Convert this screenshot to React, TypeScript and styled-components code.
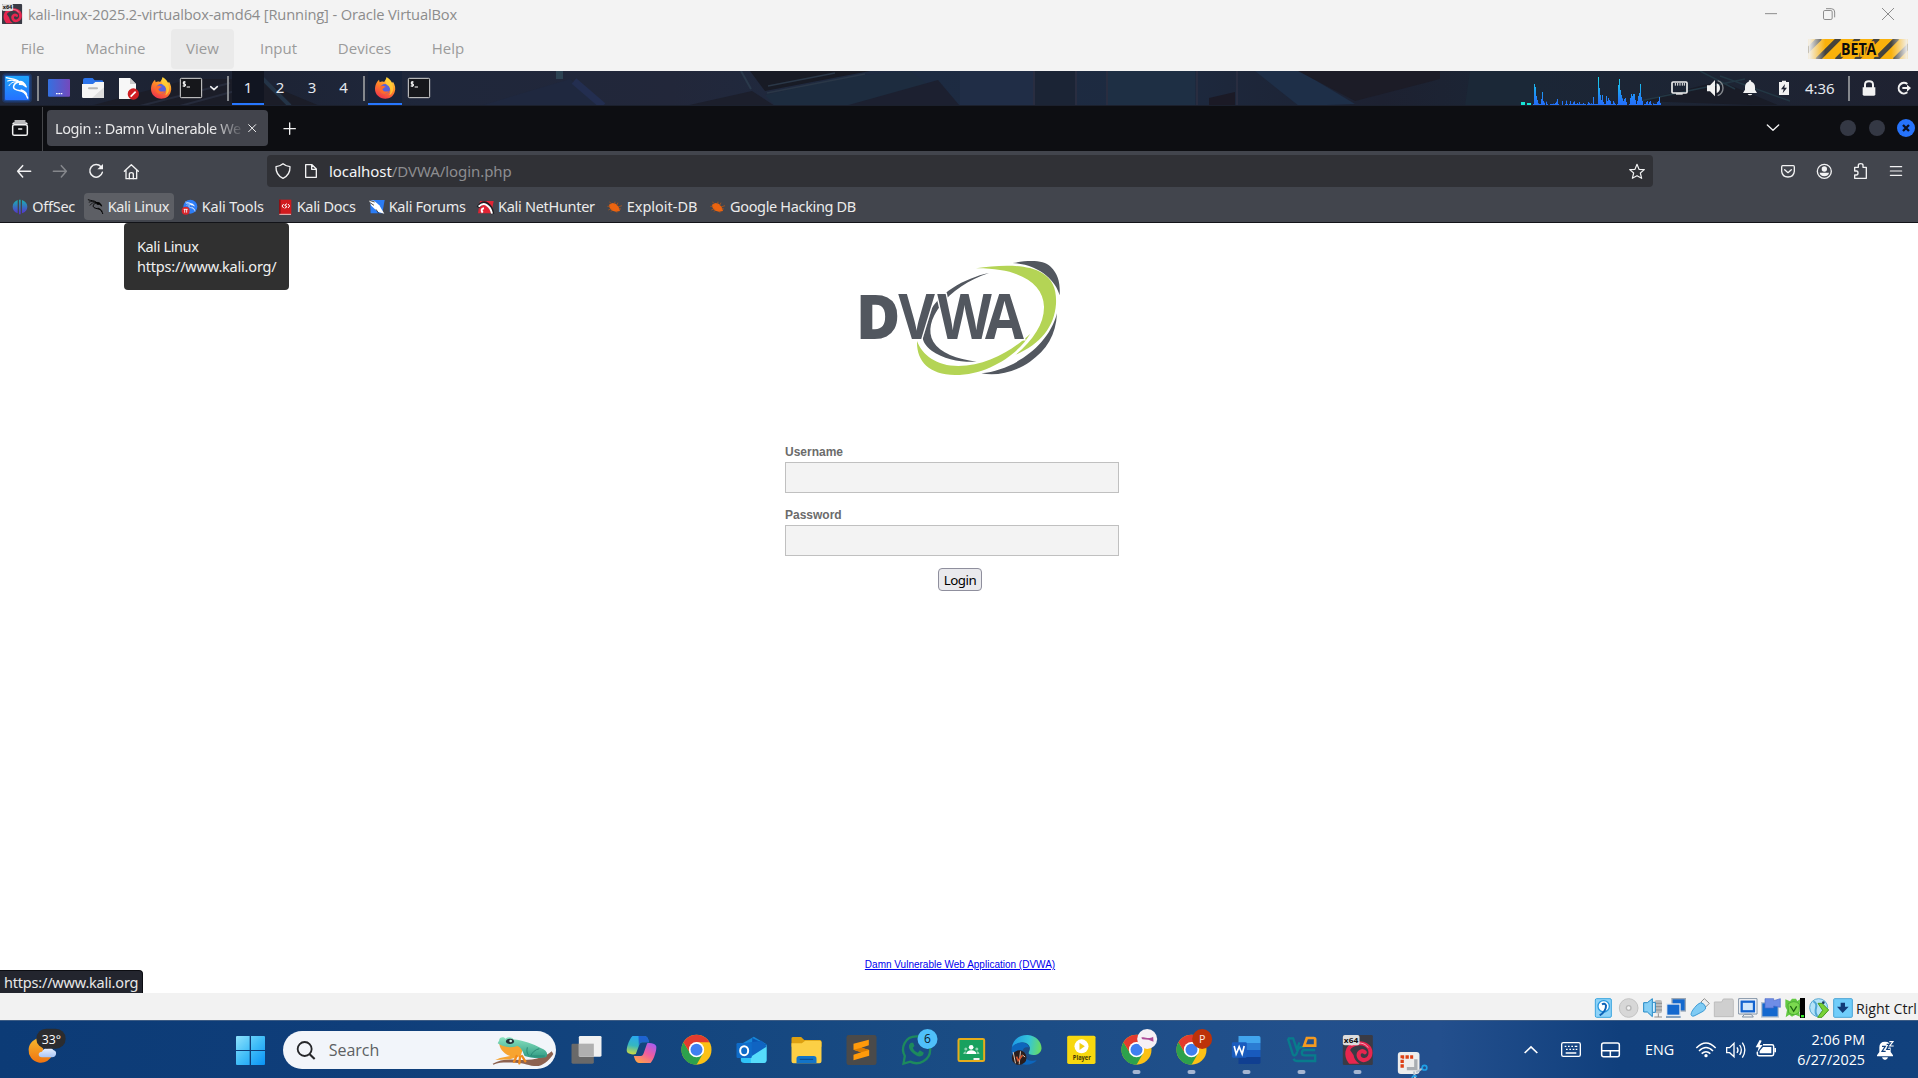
import React from "react";
import styled, { createGlobalStyle } from "styled-components";

const noto = '"Noto Sans", "DejaVu Sans", sans-serif';
const segoe = '"Open Sans", "Noto Sans", sans-serif';

const Global = createGlobalStyle`
  *, *::before, *::after { box-sizing: border-box; }
  body { margin: 0; background: #fff; overflow: hidden; }
  p { margin: 0; }
`;

const Screen = styled.div`
  width: 1918px;
  height: 1078px;
  display: flex;
  flex-direction: column;
  background: #fff;
  overflow: hidden;
`;

/* Every pictogram is drawn on a grid of three units per pixel. */
const Glyph = styled.svg<{ $ml?: number }>`
  display: block;
  flex: none;
  margin-left: ${(p) => p.$ml ?? 0}px;
`;

type PicProps = { x: number; y: number; w: number; h: number; ml?: number; children: React.ReactNode };
const Pic = ({ x, y, w, h, ml, children }: PicProps) => (
  <Glyph $ml={ml} width={w / 3} height={h / 3} viewBox={`${x} ${y} ${w} ${h}`} fill="none">
    {children}
  </Glyph>
);

const Label = styled.span<{ $ml?: number; $ls?: number; $w?: number }>`
  flex: none;
  white-space: nowrap;
  margin-left: ${(p) => p.$ml ?? 0}px;
  letter-spacing: ${(p) => p.$ls ?? 0}px;
  ${(p) => (p.$w ? `width: ${p.$w}px;` : "")}
`;

const Spacer = styled.div`
  flex: 1;
`;

/* ---------- VirtualBox window chrome ---------- */
const TitleBar = styled.header`
  height: 29px;
  flex: none;
  display: flex;
  align-items: center;
  padding-bottom: 1px;
  background: #f3f3f3;
  color: #8c8c8c;
  font: 14.67px/18px ${segoe};
`;

const MenuBar = styled.nav`
  height: 42px;
  flex: none;
  display: flex;
  align-items: flex-start;
  padding-left: 5px;
  background: #f3f3f3;
  color: #9b9b9b;
  font: 15px/39px ${segoe};
`;

const MenuItem = styled.div<{ $w: number; $active?: boolean }>`
  width: ${(p) => p.$w}px;
  height: 40px;
  text-align: center;
  border-radius: 4px;
  background: ${(p) => (p.$active ? "#eaeaea" : "transparent")};
`;

/* ---------- Kali desktop panel ---------- */
const Panel = styled.div`
  position: relative;
  isolation: isolate;
  height: 35px;
  flex: none;
  display: flex;
  align-items: center;
  background: #1e2536;
  color: #e4e8ee;
  font: 15px/35px ${noto};
`;

const Wallpaper = styled.svg`
  position: absolute;
  inset: 0;
  z-index: -1;
`;

const PanelDivider = styled.i<{ $ml: number }>`
  width: 2px;
  height: 25px;
  flex: none;
  margin-left: ${(p) => p.$ml}px;
  background: #85888d;
`;

const Workspace = styled.div<{ $w: number; $active?: boolean }>`
  width: ${(p) => p.$w}px;
  height: 34px;
  flex: none;
  align-self: flex-start;
  text-align: center;
  line-height: 33px;
  background: ${(p) => (p.$active ? "#111521" : "transparent")};
  border-bottom: 2px solid ${(p) => (p.$active ? "#2777ff" : "transparent")};
`;

const WindowButton = styled.div`
  height: 34px;
  width: 34px;
  flex: none;
  align-self: flex-start;
  overflow: hidden;
  background: #182339;
  border-bottom: 2px solid #2777ff;
`;

/* ---------- Firefox ---------- */
const TabBar = styled.div`
  height: 45px;
  flex: none;
  display: flex;
  align-items: center;
  background: #0d0e12;
  color: #e9e9ea;
  font: 14.5px/20px ${noto};
`;

const TabDivider = styled.i`
  width: 1px;
  height: 44px;
  flex: none;
  background: #45464a;
`;

const Tab = styled.div`
  width: 221px;
  height: 36px;
  flex: none;
  margin: 0 0 1px 4px;
  padding-left: 8px;
  border-radius: 4px;
  display: flex;
  align-items: center;
  background: #42444c;
`;

const TabTitle = styled.div`
  width: 190px;
  flex: none;
  white-space: nowrap;
  letter-spacing: -0.4px;
  mask-image: linear-gradient(90deg, #000 158px, transparent 190px);
`;

const NavBar = styled.div`
  height: 39px;
  flex: none;
  display: flex;
  align-items: flex-start;
  background: #42454d;
`;

const UrlBar = styled.div`
  width: 1386px;
  height: 32px;
  flex: none;
  margin-top: 4px;
  display: flex;
  align-items: center;
  border-radius: 4px;
  background: #303136;
  color: #8d8d90;
  font: 15px/32px ${noto};
  overflow: hidden;
`;

const Host = styled.b`
  font-weight: 400;
  color: #f5f5f6;
`;

const BookmarkBar = styled.div`
  height: 33px;
  flex: none;
  display: flex;
  align-items: flex-start;
  padding-left: 10px;
  background: #42454d;
  border-bottom: 1px solid #121318;
  color: #ebebeb;
  font: 14.5px/31px ${noto};
`;

const Bookmark = styled.div<{ $w: number; $ls: number }>`
  width: ${(p) => p.$w}px;
  height: 33px;
  flex: none;
  display: flex;
  white-space: nowrap;
  letter-spacing: ${(p) => p.$ls}px;
  padding-top: 1px;
`;

const HoveredBookmark = styled(Bookmark)`
  height: 27px;
  margin: 3px 6px 0 2px;
  padding: 0;
  border-radius: 4px;
  background: #5d5f65;
  line-height: 27px;
`;

/* ---------- DVWA login page ---------- */
const Page = styled.main`
  position: relative;
  height: 770px;
  flex: none;
  display: flex;
  flex-direction: column;
  align-items: center;
  padding: 17px 0 21px 2px;
  background: #fff;
`;

const Tooltip = styled.div`
  position: absolute;
  left: 124px;
  top: 0;
  width: 165px;
  height: 67px;
  padding: 13px 13px;
  border-radius: 4px;
  background: #303030;
  color: #f1f1f1;
  font: 14.5px/20px ${noto};
  white-space: nowrap;
`;

const LinkStatus = styled.div`
  position: absolute;
  left: 0;
  bottom: 0;
  width: 143px;
  height: 23px;
  padding-left: 4px;
  border: solid #0c0d12;
  border-width: 1px 1px 0 0;
  border-radius: 0 4px 0 0;
  background: #23252e;
  color: #e8e8e8;
  font: 14.5px/22px ${noto};
  letter-spacing: -0.2px;
  overflow: hidden;
  white-space: nowrap;
`;

const LoginForm = styled.form`
  width: 350px;
  margin-top: 54px;
  display: flex;
  flex-direction: column;
`;

const FieldLabel = styled.label`
  height: 16px;
  margin-bottom: 2px;
  font: bold 12px/16px "Liberation Sans", Arial, sans-serif;
  color: #6b6b6b;
`;

const Field = styled.input`
  width: 334px;
  height: 31px;
  margin: 0 0 14px;
  padding: 6px;
  border: 1px solid #c0c0c0;
  border-radius: 0;
  background: #f3f3f3;
  outline: none;
`;

const LoginButton = styled.button`
  align-self: center;
  width: 44px;
  height: 23px;
  margin-top: -2px;
  padding: 1px 0 0;
  border: 1px solid #8f8f9d;
  border-radius: 4px;
  background: #e9e9ed;
  color: #000;
  font: 13.33px/20px ${noto};
  letter-spacing: -0.5px;
`;

const FooterLink = styled.a`
  margin-top: auto;
  font: 10px/15px "Liberation Sans", Arial, sans-serif;
  color: #0000ee;
  text-decoration: underline;
`;

/* ---------- VirtualBox status bar and Windows taskbar ---------- */
const StatusBar = styled.div`
  height: 27px;
  flex: none;
  display: flex;
  align-items: center;
  padding-left: 1593px;
  background: #f2f2f2;
  color: #1a1a1a;
  font: 14.2px/20px ${segoe};
`;

const HostKey = styled.span`
  flex: none;
  margin-left: -1px;
  padding-top: 4px;
  white-space: nowrap;
`;

const Taskbar = styled.footer`
  height: 58px;
  flex: none;
  display: flex;
  align-items: center;
  border-top: 1px solid #3d5c84;
  background: linear-gradient(90deg, #0c3b76 0, #0f3e7a 360px, #14467f 700px, #1a4c84 960px, #22508c 1300px, #234f8d 1440px, #103f7c 1620px, #11417d 1918px);
  color: #fff;
  font: 14.3px/20px ${segoe};
`;

const SearchPill = styled.div`
  width: 273px;
  height: 38px;
  flex: none;
  margin-left: 13px;
  border-radius: 19px;
  display: flex;
  align-items: center;
  background: #f2f5fa;
  color: #5c5f63;
  font: 16px/38px ${segoe};
  overflow: hidden;
`;

const SearchHint = styled.span`
  padding-top: 1px;
`;

const AppStrip = styled.div`
  display: flex;
  margin-left: 2.5px;
`;

const Clock = styled.div`
  width: 79px;
  flex: none;
  margin: 0 1px 0 6px;
  display: flex;
  flex-direction: column;
  align-items: flex-end;
`;

/* ---------- Drawings ---------- */
const Dragon = ({ color }: { color: string }) => (
  <g stroke={color} strokeLinecap="round" strokeLinejoin="round">
    <path d="M4 5C16 10 30 6 42 17" strokeWidth="4" />
    <path d="M8 15C18 11 28 11 40 18" strokeWidth="3.4" />
    <path d="M12 29C18 19 28 15 40 19" strokeWidth="3" />
    <path d="M40 18C26 22 20 36 33 41C45 46 61 43 68 66" strokeWidth="4.4" />
    <path d="M40 18C50 12 59 21 64 33L54 26L43 25" strokeWidth="3.4" fill={color} />
    <path d="M48 42C56 44 62 49 65 55" strokeWidth="4" />
  </g>
);

const FirefoxMark = () => (
  <g>
    <path d="M6 16C8 12 10 10 13 7L15 15C19 12 24 12 28 14C32 10 34 6 36 0C44 5 50 11 52 17L55 13C61 22 64 34 60 44C56 57 46 64 32 64C14 64 1 51 1 35C1 27 3 20 6 16Z" fill="url(#ff)" />
    <circle cx="31" cy="35" r="15" fill="#5562dd" />
    <path d="M17 28C23 23 29 26 34 29C28 29 28 34 23 35C25 43 35 45 43 40C40 49 29 53 20 47C14 42 14 34 17 28Z" fill="#ff6a2b" />
    <path d="M36 0C45 6 52 14 54 25C58 38 53 49 44 54C50 42 48 30 38 24C31 19 32 8 36 0Z" fill="#ffd236" opacity=".8" />
  </g>
);

const Terminal = () => (
  <g>
    <rect x="1" y="1" width="64" height="58" rx="3" fill="#16171b" stroke="#d8d8d8" strokeWidth="3" />
    <path d="M17 12H10V18H16V24H8M12.500 9V27M20 27H30" stroke="#fff" strokeWidth="3" />
  </g>
);

const ChromeMark = ({ cx }: { cx: number }) => (
  <g transform={`translate(${cx} 119)`}>
    <circle r="45" fill="#fbc116" />
    <path d="M-39 -22.500A45 45 0 0 0 0 45L20 11L0 0L-19 11Z" fill="#2da14c" />
    <path d="M-39 -22.500A45 45 0 0 1 39 -22.500H0L-20 -10L-19 11Z" fill="#e33b2e" />
    <circle r="23" fill="#fff" />
    <circle r="18" fill="#3f7ff0" />
  </g>
);

const Bug = () => (
  <g>
    <path d="M6 13L17 8L27 11L35 20L39 32L27 34L16 31L8 23Z" fill="#ec6410" />
    <path d="M1 18H10M4 29L13 25M7 5L15 11M24 4L23 12M33 7L29 15M45 16L33 20M42 26L35 25M30 37L28 31M12 34L17 28" stroke="#c9590f" strokeWidth="2" />
  </g>
);

const graphBars: [number, number][] = [
  [288, 63], [291, 54], [294, 27], [297, 15], [300, 5], [303, 3], [309, 18], [312, 39], [315, 12], [318, 7], [324, 10], [345, 4], [351, 6], [354, 10],
  [357, 18], [372, 12], [384, 13], [396, 12], [405, 8], [408, 11], [417, 6], [423, 9], [435, 6], [450, 9], [453, 6], [459, 5], [465, 24], [480, 84],
  [483, 51], [486, 30], [489, 15], [492, 30], [495, 9], [504, 27], [507, 12], [510, 21], [513, 15], [516, 12], [525, 12], [528, 7], [540, 60], [543, 78],
  [546, 45], [549, 30], [552, 20], [555, 12], [558, 18], [561, 21], [564, 9], [576, 21], [579, 33], [582, 27], [585, 33], [588, 33], [591, 15], [597, 12],
  [600, 27], [603, 36], [606, 63], [609, 24], [612, 12], [624, 9], [627, 12], [633, 9], [636, 12], [645, 5], [657, 9], [660, 12], [663, 24], [666, 6],
];

const Backdrop = () => (
  <Wallpaper width="1918" height="35" viewBox="0 0 1918 35" preserveAspectRatio="none">
    <defs>
      <linearGradient id="wall">
        <stop offset="0" stopColor="#20273a" />
        <stop offset=".1" stopColor="#1c2232" />
        <stop offset=".22" stopColor="#1f273b" />
        <stop offset=".35" stopColor="#22273a" />
        <stop offset=".48" stopColor="#1d2b42" />
        <stop offset=".6" stopColor="#1d2a40" />
        <stop offset=".72" stopColor="#1d2131" />
        <stop offset=".8" stopColor="#1b2636" />
        <stop offset="1" stopColor="#1f2231" />
      </linearGradient>
    </defs>
    <path d="M0 0H1918V35H0Z" fill="url(#wall)" />
    <path d="M90 35L190 8L255 8L320 35Z" fill="#1b1d28" />
    <path d="M140 35L230 12M180 35L250 16" stroke="#262b3b" strokeWidth="2" />
    <path d="M255 0L290 35" stroke="#243447" strokeWidth="4" />
    <path d="M480 35L570 8L600 35Z" fill="#1f283f" />
    <path d="M574 10L603 35" stroke="#232e50" strokeWidth="7" />
    <path d="M556 0H563V8H556Z" fill="#2d4353" />
    <path d="M685 35L752 20L775 35Z" fill="#1c1f2c" />
    <path d="M741 0L751 18" stroke="#2a394b" strokeWidth="2" />
    <path d="M765 24L850 5L910 0L930 15L850 35H775Z" fill="#1d2c3f" />
    <path d="M750 0H870L765 20Z" fill="#181b25" />
    <path d="M767 22L865 3M768 15L835 2" stroke="#2a3747" strokeWidth="1.500" />
    <path d="M845 35L938 9L960 35Z" fill="#1c2030" />
    <path d="M960 0H1034V35H960Z" fill="#202d46" />
    <path d="M1034 0H1075V35H1034Z" fill="#1b2435" />
    <path d="M1107 0H1195V35H1107Z" fill="#1e2f44" />
    <path d="M1034 0V35M1076 0V35M1107 0V35M1197 0V35M1237 0V35" stroke="#292d40" strokeWidth="2" />
    <path d="M1209 27L1235 21V35H1209Z" fill="#1b1a26" />
    <path d="M1255 0H1300L1355 33L1299 35Z" fill="#1e2f48" />
    <path d="M1298 0H1440V8L1355 30Z" fill="#1c1c27" />
    <path d="M1470 0L1465 35H1540V0Z" fill="#1b2837" />
    <path d="M1640 30L1720 10L1780 35Z" fill="#191c27" />
    <path d="M1640 30L1745 8M1720 5L1790 30M1700 0L1735 18" stroke="#233744" strokeWidth="1.500" />
    <path d="M0 34.500H1918" stroke="#1b202d" />
  </Wallpaper>
);

const DvwaLogo = () => (
  <svg width="240" height="150" viewBox="0 0 720 450">
    <g fill="#52575f">
      <path d="M447 99C375 114 290 160 262 230C240 275 240 305 275 332C312 358 360 367 410 365C350 357 300 338 280 305C262 275 272 235 302 196C335 153 385 120 447 99Z" />
      <path d="M518 69C570 60 610 60 632 80C655 102 661 130 659 166C648 124 600 74 518 69Z" />
      <path d="M651 220C648 285 620 330 570 365C525 397 470 409 424 400C520 390 625 320 651 220Z" />
    </g>
    <g fill="#b4d455">
      <path d="M408 85C480 74 560 72 605 98C640 118 650 150 648 192C643 262 600 312 526 345C580 300 613 250 612 200C610 130 540 84 408 85Z" />
      <path d="M231 303C246 345 290 378 355 378C440 378 520 330 571 281C535 342 445 405 345 405C265 404 229 362 231 303Z" />
    </g>
    <g fontFamily='"Open Sans", sans-serif' fontWeight="700" fontSize="188" fill="#52575f" stroke="#fff" strokeWidth="9" paintOrder="stroke">
      <text x="48" y="297" fontWeight="800" textLength="133" lengthAdjust="spacingAndGlyphs">D</text>
      <text x="194 324 483" y="297" transform="scale(.9 1)">VWA</text>
    </g>
  </svg>
);

const Swirl = () => (
  <g>
    <rect width="90" height="90" rx="4" fill="#3a3b45" />
    <path d="M22 80C8 62 10 36 34 28C60 18 84 32 83 54C82 75 58 82 49 67C43 54 56 43 66 52" stroke="#e7264f" strokeWidth="12" strokeLinecap="round" />
    <path d="M22 80C12 68 12 50 18 40L32 60C34 72 40 80 50 86H24Z" fill="#e7264f" />
    <path d="M26 31C44 20 66 22 76 38" stroke="#f6a5b8" strokeWidth="3" />
    <rect width="50" height="31" rx="6" fill="#dcdcdc" />
    <text x="3" y="24" fontSize="23" fontWeight="700" fontFamily={segoe} fill="#111" textLength="43" lengthAdjust="spacingAndGlyphs">x64</text>
  </g>
);

const Running = ({ cx }: { cx: number }) => <rect x={cx - 12} y="180" width="24" height="12" rx="6" fill="#a5b6d2" />;

const appIcons: React.ReactNode[] = [
  <>
    <rect x="33" y="101" width="67" height="60" rx="4" fill="#696969" />
    <rect x="55" y="78" width="68" height="62" rx="4" fill="#f1f1f1" />
    <path d="M55 101H100V140H55Z" fill="#b0b0b0" />
  </>,
  <>
    <path d="M216 78H252C262 79 263 88 266 97H246C240 97 237 102 235 108L226 132C221 134 206 134 200 127C195 120 205 88 216 78Z" fill="url(#copA)" />
    <path d="M234 78H252C262 79 263 88 266 97H246C240 97 237 102 235 108Z" fill="#1b4bc7" opacity=".75" />
    <path d="M270 159H236C224 157 223 147 220 138H240C247 138 249 131 251 125L260 100C270 98 282 100 287 108C290 118 280 150 270 159Z" fill="url(#copB)" />
  </>,
  <ChromeMark cx={408} />,
  <>
    <path d="M541 103L580 80L618 103V112L580 135Z" fill="#1687d9" />
    <path d="M575 84L618 104L575 130Z" fill="#0a55b3" />
    <path d="M541 112L618 112V150Q618 159 609 159H552Q541 159 541 150Z" fill="#2fc3f7" />
    <path d="M571 140L618 106V150Q618 159 609 159H571Z" fill="#56dcfb" />
    <path d="M560 98L604 92L618 110L574 138Z" fill="#1064c2" />
    <rect x="528" y="99" width="46" height="45" rx="4" fill="#0f6cc9" />
    <ellipse cx="551" cy="122" rx="12" ry="13.500" stroke="#fff" strokeWidth="6" />
  </>,
  <>
    <path d="M693 85Q693 81 698 81H722L731 90H778Q783 90 783 95V110H693Z" fill="#dda011" />
    <path d="M693 100H724L734 92H778Q783 92 783 97V154Q783 160 777 160H699Q693 160 693 154Z" fill="#fccf45" />
    <path d="M708 160V146Q708 138 716 138H760Q768 138 768 146V160Z" fill="#1274c8" />
    <path d="M718 148H758" stroke="#0a4a8c" strokeWidth="3" />
  </>,
  <>
    <rect x="858" y="75" width="90" height="90" rx="7" fill="#4a4a4a" />
    <path d="M879 101L925 89V106L903 113L926 120V137L879 151V134L902 127L879 119Z" fill="#ff9a0a" />
    <path d="M879 119L903 113L926 120L902 127Z" fill="#d97b00" />
  </>,
  <>
    <path d="M1029 161L1033 138C1020 114 1032 79 1068 79C1094 79 1109 98 1109 119C1109 150 1075 168 1049 155Z" stroke="#1d8a5d" strokeWidth="7" />
    <path d="M1052 98C1042 104 1044 115 1053 125C1063 136 1078 144 1087 136L1090 128L1078 121L1072 128C1064 125 1059 119 1057 113L1062 108L1058 98Z" fill="#1d8a5d" />
    <circle cx="1101" cy="87" r="30" fill="#4fc0fa" />
    <text x="1101" y="99" textAnchor="middle" fontSize="36" fontFamily={segoe} fill="#0b1a2b">6</text>
  </>,
  <>
    <rect x="1194" y="87" width="77" height="66" rx="4" fill="#18a15f" stroke="#e6ad1c" strokeWidth="6" />
    <circle cx="1232" cy="112" r="7" fill="#fff" />
    <path d="M1217 132Q1219 121 1232 121Q1246 121 1248 132Z" fill="#fff" />
    <circle cx="1216" cy="117" r="4.500" fill="#8fd4b1" />
    <circle cx="1249" cy="117" r="4.500" fill="#8fd4b1" />
    <path d="M1208 132Q1209 124 1216 124V132ZM1257 132Q1256 124 1249 124V132Z" fill="#8fd4b1" />
    <path d="M1239 144H1257V150H1239Z" fill="#f1f1f1" />
  </>,
  <g transform="translate(1320 0)">
    <path d="M34 112C38 85 60 74 82 75C108 77 124 97 123 116C121 132 103 139 87 133C80 129 90 123 88 112C82 92 55 94 34 112Z" fill="url(#edge)" />
    <path d="M34 112C50 92 80 94 86 113C74 109 65 116 66 128C69 148 90 156 109 151C92 170 55 169 41 145C34 133 32 122 34 112Z" fill="#0d66bc" />
    <circle cx="56" cy="143" r="22" fill="#2b1d1b" />
    <path d="M38 126L45 160M60 124L56 163M66 135L74 141" stroke="#d8c5b4" strokeWidth="3" />
    <path d="M48 140L53 152L66 136" stroke="#d2542d" strokeWidth="5" />
  </g>,
  <g transform="translate(1320 0)">
    <rect x="200" y="77" width="85" height="85" rx="5" fill="#f7d80f" />
    <circle cx="243" cy="109" r="21" fill="#fff" />
    <path d="M237 98L253 109L237 120Z" fill="#f0cf12" />
    <text x="217" y="151" fontSize="20" fontWeight="700" fontFamily={segoe} fill="#3e3608" textLength="54" lengthAdjust="spacingAndGlyphs">Player</text>
  </g>,
  <g transform="translate(1320 0)">
    <ChromeMark cx={408} />
    <circle cx="440" cy="87" r="30" fill="#f5f0f5" />
    <path d="M422 83C434 78 442 90 458 80L459 95L444 89L426 88Z" fill="#ae4b98" />
    <Running cx={408} />
  </g>,
  <g transform="translate(1320 0)">
    <ChromeMark cx={573} />
    <circle cx="605" cy="87" r="30" fill="#bd3209" />
    <text x="605" y="98" textAnchor="middle" fontSize="32" fontFamily={segoe} fill="#ffe9e0">P</text>
    <Running cx={573} />
  </g>,
  <g transform="translate(1320 0)">
    <path d="M714 78H775Q780 78 780 83V99H714Z" fill="#41a5ee" />
    <path d="M714 99H780V120H714Z" fill="#2b7cd3" />
    <path d="M714 120H780V141H714Z" fill="#185abd" />
    <path d="M714 141H780V157Q780 162 775 162H714Z" fill="#103f91" />
    <rect x="694" y="97" width="45" height="46" rx="4" fill="#1a5cbe" />
    <path d="M701 108L707 132L716 110L725 132L731 108" stroke="#fff" strokeWidth="5" />
    <Running cx={738} />
  </g>,
  <g transform="translate(1320 0)">
    <path d="M862 85H878L889 118L897 97M862 85L877 133Q881 140 887 133L893 118Q896 111 904 111H912" stroke="#087c8c" strokeWidth="7" />
    <path d="M944 120H912Q904 120 904 128Q904 136 912 136H944V153H890Q882 153 879 146" stroke="#087c8c" strokeWidth="7" />
    <path d="M911 107L919 84H940Q944 84 944 88V107Z" stroke="#f49a20" strokeWidth="8" />
    <Running cx={903} />
  </g>,
  <g transform="translate(1320 0)">
    <g transform="translate(1027 75)">
      <Swirl />
    </g>
    <Running cx={1071} />
  </g>,
  <g transform="translate(1320 0)">
    <rect x="1192" y="126" width="65" height="66" rx="9" fill="#ededed" />
    <path d="M1205 173V141H1238" stroke="#dd4016" strokeWidth="10" strokeDasharray="10 4" />
    <path d="M1219 176H1246V148" stroke="#a9adb2" strokeWidth="10" />
    <path d="M1247 187L1266 175M1240 184L1244 204" stroke="#b8c4d0" strokeWidth="6" />
    <circle cx="1272" cy="173" r="7" stroke="#1fa0e6" strokeWidth="5" />
    <path d="M1234 204Q1240 193 1249 200" stroke="#1fa0e6" strokeWidth="5" />
  </g>,
];

const StatusIcons = () => (
  <>
    <Pic x={459} y={39} w={72} h={81}>
      <rect x="466" y="56" width="48" height="56" rx="4" fill="#8ed3f8" stroke="#3aa5df" strokeWidth="3" />
      <circle cx="491" cy="79" r="17" fill="#fff" stroke="#2a9ae0" strokeWidth="4" />
      <path d="M486 73Q494 68 498 76Q499 94 479 106" stroke="#0b62b7" strokeWidth="6" />
    </Pic>
    <Pic x={531} y={39} w={72} h={81}>
      <circle cx="566" cy="84" r="28" fill="#d7d7d7" stroke="#c3c3c3" strokeWidth="3" />
      <circle cx="566" cy="84" r="7" fill="#f3f3f3" stroke="#b7b7b7" strokeWidth="4" />
    </Pic>
    <Pic x={603} y={39} w={72} h={81}>
      <rect x="644" y="60" width="22" height="40" rx="6" fill="#bcbcbc" />
      <path d="M645 70H666M645 80H666M645 90H666M655 100V111M643 111H666" stroke="#8f8f8f" strokeWidth="3" />
      <path d="M611 68H622L637 56V110L622 96H611Z" fill="#86cff5" stroke="#2289c7" strokeWidth="3" />
      <path d="M639 67H646V97H639" fill="#d8f1ff" stroke="#2289c7" strokeWidth="3" />
    </Pic>
    <Pic x={675} y={39} w={72} h={81}>
      <rect x="696" y="56" width="40" height="37" fill="#1368ce" stroke="#9ba7b4" strokeWidth="4" />
      <rect x="680" y="72" width="40" height="34" fill="#1368ce" stroke="#e2e8ef" strokeWidth="4" />
      <path d="M678 111H722" stroke="#4a79a8" strokeWidth="4" />
    </Pic>
    <Pic x={747} y={39} w={72} h={81}>
      <path d="M783 66L793 56L808 70L797 81Z" fill="#eee" stroke="#8e8e8e" strokeWidth="3" />
      <path d="M772 74Q782 64 790 71L796 79Q801 87 789 94L768 105Q755 113 753 103Q754 92 772 74Z" fill="#7fcbf4" stroke="#3e9bd4" strokeWidth="3" />
    </Pic>
    <Pic x={819} y={39} w={72} h={81}>
      <path d="M823 66H845L850 57H876Q880 57 880 61V110H823Z" fill="#cfcfcf" stroke="#bdbdbd" strokeWidth="3" />
    </Pic>
    <Pic x={891} y={39} w={72} h={81}>
      <path d="M896 56H951V102H896Z" fill="#fff" stroke="#7d8fa3" strokeWidth="3" />
      <rect x="905" y="65" width="37" height="29" fill="#cfe6fb" stroke="#1263cf" strokeWidth="7" />
      <path d="M907 111L913 103H934L940 111Z" fill="#eee" stroke="#7d8fa3" strokeWidth="3" />
    </Pic>
    <Pic x={963} y={39} w={72} h={81}>
      <rect x="965" y="68" width="50" height="43" fill="#1368ce" stroke="#b6c3d0" strokeWidth="4" />
      <path d="M975 56H1001V62L1021 56V82L1001 78V84H975Z" fill="#6f8de6" stroke="#4a68c8" strokeWidth="2" />
    </Pic>
    <Pic x={1035} y={39} w={72} h={81}>
      <path d="M1080 54H1095V114H1080Z" fill="#000" />
      <path d="M1083 105H1092V112H1083Z" fill="#35e82b" />
      <path d="M1036 58L1050 64L1056 56H1068L1072 63L1080 58V80L1077 92L1080 110L1066 104L1056 110L1048 104L1037 112L1041 90L1036 80Z" fill="#63c943" />
      <path d="M1044 72Q1062 58 1078 72V94Q1066 112 1046 98Z" fill="#7bd94f" stroke="#3d9a2c" strokeWidth="2" />
      <path d="M1051 78L1061 94L1070 79" stroke="#1d6512" strokeWidth="4" />
    </Pic>
    <Pic x={1107} y={39} w={72} h={81}>
      <circle cx="1136" cy="83" r="27" fill="#b3e2f8" stroke="#56a8d2" strokeWidth="3" />
      <path d="M1120 64Q1132 69 1128 84Q1124 99 1132 108" stroke="#4fa5d5" strokeWidth="6" />
      <path d="M1134 70L1146 70L1166 90L1146 112H1133L1148 91Z" fill="#79d236" stroke="#4a9a20" strokeWidth="3" />
      <circle cx="1150" cy="68" r="4" fill="#1b3e5b" />
    </Pic>
    <Pic x={1179} y={39} w={72} h={81}>
      <rect x="1181" y="56" width="56" height="56" rx="3" fill="#70cdfa" stroke="#4aa3d4" strokeWidth="3" />
      <path d="M1202 68H1215V80H1226L1208 99L1191 80H1202Z" fill="#123c78" />
    </Pic>
  </>
);

const line = { stroke: "#f2f2f3", strokeWidth: 4.5, strokeLinecap: "round", strokeLinejoin: "round" } as const;

export default function App() {
  return (
    <Screen>
      <Global />
      <TitleBar>
        <Pic x={0} y={0} w={78} h={84}>
          <g transform="translate(6 12) scale(.67)">
            <Swirl />
          </g>
        </Pic>
        <Label $ml={2} $ls={-0.14}>kali-linux-2025.2-virtualbox-amd64 [Running] - Oracle VirtualBox</Label>
        <Spacer />
        <Pic x={960} y={0} w={480} h={84}>
          <path d="M981 41H1017" stroke="#8c8c8c" strokeWidth="3" />
          <path d="M1164 26H1180Q1190 26 1190 36V52" stroke="#8c8c8c" strokeWidth="3" />
          <rect x="1156.500" y="31.500" width="26" height="27" rx="4" stroke="#8c8c8c" strokeWidth="3" />
          <path d="M1332 24L1368 60M1368 24L1332 60" stroke="#8c8c8c" strokeWidth="3" />
        </Pic>
      </TitleBar>
      <MenuBar>
        <MenuItem $w={55}>File</MenuItem>
        <MenuItem $w={111}>Machine</MenuItem>
        <MenuItem $w={63} $active>View</MenuItem>
        <MenuItem $w={89}>Input</MenuItem>
        <MenuItem $w={83}>Devices</MenuItem>
        <MenuItem $w={84}>Help</MenuItem>
        <Spacer />
        <Pic x={1110} y={87} w={330} h={126}>
          <defs>
            <linearGradient id="betaFade">
              <stop offset="0" stopColor="#f3f3f3" />
              <stop offset=".17" stopColor="#f3f3f3" stopOpacity="0" />
              <stop offset=".83" stopColor="#f3f3f3" stopOpacity="0" />
              <stop offset="1" stopColor="#f3f3f3" />
            </linearGradient>
            <clipPath id="betaClip">
              <rect x="1112" y="117" width="297" height="60" />
            </clipPath>
          </defs>
          <g clipPath="url(#betaClip)">
            <rect x="1112" y="117" width="297" height="60" fill="#f9b10b" />
            <path d="M1080 180L1146 114M1138 180L1204 114M1196 180L1262 114M1254 180L1320 114M1312 180L1378 114M1370 180L1436 114" stroke="#45433c" strokeWidth="15" />
            <rect x="1111" y="116" width="299" height="62" fill="url(#betaFade)" />
          </g>
          <text x="1209" y="164" fontSize="46" fontWeight="700" fontFamily={segoe} fill="#0c0c0c" stroke="#f9b10b" strokeWidth="10" paintOrder="stroke" textLength="106" lengthAdjust="spacingAndGlyphs">BETA</text>
        </Pic>
      </MenuBar>

      <Panel>
        <Backdrop />
        <Pic x={0} y={213} w={105} h={105}>
          <defs>
            <linearGradient id="kali" x2="0" y2="1">
              <stop stopColor="#1ea3fb" />
              <stop offset="1" stopColor="#2571ff" />
            </linearGradient>
            <linearGradient id="ff" x1=".8" y1="0" x2=".3" y2="1">
              <stop stopColor="#ffe04a" />
              <stop offset=".45" stopColor="#ff8b26" />
              <stop offset="1" stopColor="#f0324c" />
            </linearGradient>
          </defs>
          <rect x="6" y="220" width="90" height="88" rx="12" fill="#1c62d8" opacity=".25" />
          <rect x="11" y="224" width="80" height="80" rx="7" fill="#1c62d8" opacity=".45" />
          <rect x="15" y="228" width="72" height="72" rx="3" fill="url(#kali)" />
          <g transform="translate(15 228)">
            <Dragon color="#fff" />
          </g>
        </Pic>
        <PanelDivider $ml={2} />
        <Pic x={117} y={213} w={114} h={105}>
          <defs>
            <linearGradient id="desk">
              <stop stopColor="#3470e0" />
              <stop offset="1" stopColor="#7549bc" />
            </linearGradient>
          </defs>
          <rect x="144" y="237" width="66" height="53" rx="3" fill="url(#desk)" />
          <path d="M168 281H173M175 281H180M182 281H187" stroke="#fff" strokeWidth="4" />
        </Pic>
        <Pic x={231} y={213} w={102} h={105}>
          <path d="M249 240Q249 234 255 234H278L284 241H306Q310 241 310 246V260H249Z" fill="#2b73ea" />
          <path d="M246 252H279L286 246H312V291Q312 294 308 294H250Q246 294 246 290Z" fill="#f5f5f5" />
          <path d="M312 262V294H276Z" fill="#dedede" />
          <rect x="264" y="262" width="30" height="6" rx="3" fill="#b9b9b9" />
        </Pic>
        <Pic x={333} y={213} w={102} h={105}>
          <path d="M357 234H390L408 252V297H357Z" fill="#f7f7f7" />
          <path d="M390 234L408 252H390Z" fill="#cacaca" />
          <circle cx="400" cy="282" r="17" fill="#cf1e22" />
          <path d="M392 290L407 275" stroke="#fff" strokeWidth="5" />
        </Pic>
        <Pic x={435} y={213} w={96} h={105}>
          <g transform="translate(452 232)">
            <FirefoxMark />
          </g>
        </Pic>
        <Pic x={531} y={213} w={147} h={105}>
          <g transform="translate(540 234)">
            <Terminal />
          </g>
          <path d="M632 260L642 269L652 260" {...line} />
        </Pic>
        <PanelDivider $ml={1} />
        <Label $w={3} />
        <Workspace $w={32} $active>1</Workspace>
        <Workspace $w={32}>2</Workspace>
        <Workspace $w={32}>3</Workspace>
        <Workspace $w={31}>4</Workspace>
        <PanelDivider $ml={4} />
        <Label $w={3} />
        <WindowButton>
          <Pic x={1104} y={213} w={102} h={105}>
            <g transform="translate(1124 232)">
              <FirefoxMark />
            </g>
          </Pic>
        </WindowButton>
        <Pic x={1206} y={213} w={102} h={105}>
          <g transform="translate(1224 234)">
            <Terminal />
          </g>
        </Pic>
        <Spacer />
        <Pic x={246} y={213} w={438} h={105}>
          <defs>
            <linearGradient id="bars" gradientUnits="userSpaceOnUse" x1="0" x2="0" y1="228" y2="306">
              <stop stopColor="#16dbe6" />
              <stop offset="1" stopColor="#2373fa" />
            </linearGradient>
          </defs>
          <path d="M249 306H261V315H249ZM267 309H279V312H267ZM267 312H279V315H267Z" fill="#17e5d5" />
          <path d="M285 313.500H321M324 313.500H330M336 313.500H363M372 313.500H375M381 313.500H390M393 313.500H444M447 313.500H534M537 313.500H567M573 313.500H615M618 313.500H642M645 313.500H669" stroke="#2373fa" strokeWidth="3" />
          {graphBars.map(([x, h]) => (
            <rect key={x} x={x} y={315 - h} width="3" height={h} fill="url(#bars)" />
          ))}
        </Pic>
        <Pic x={684} y={213} w={99} h={105}>
          <rect x="702" y="246" width="45" height="33" rx="3" stroke="#eee" strokeWidth="5" />
          <path d="M712 249V257M719 249V257M726 249V257M733 249V257M739 249V257" stroke="#eee" strokeWidth="3" />
          <path d="M714 282H734" stroke="#eee" strokeWidth="4" />
        </Pic>
        <Pic x={783} y={213} w={102} h={105}>
          <path d="M807 256H816L831 240V289L816 274H807Z" fill="#f1f1f1" />
          <path d="M836 250Q846 254 846 264Q846 275 836 279Z" fill="#f1f1f1" />
          <path d="M839 242Q855 248 855 264Q855 281 839 287" stroke="#85898f" strokeWidth="4" />
        </Pic>
        <Pic x={885} y={213} w={102} h={105}>
          <path d="M936 240Q940 240 940 245Q951 249 951 261V269L957 279H915L921 269V261Q921 249 932 245Q932 240 936 240ZM929 282H943Q941 286 936 286Q931 286 929 282Z" fill="#f1f1f1" />
        </Pic>
        <Pic x={987} y={213} w={111} h={105}>
          <path d="M1023 246H1032V242H1044V246H1053V285H1023Z" fill="#f1f1f1" />
          <path d="M1041 252L1029 268H1037L1034 280L1047 263H1039Z" fill="#1d2130" />
        </Pic>
        <Label $ml={1} $ls={-0.1} $w={43}>4:36</Label>
        <PanelDivider $ml={0} />
        <Pic x={1236} y={213} w={204} h={105}>
          <path d="M1275 262H1312V283Q1312 287 1308 287H1278Q1274 287 1274 283V262Z" fill="#f1f1f1" />
          <path d="M1281 264V254Q1281 244 1293 244Q1305 244 1305 254V264" stroke="#f1f1f1" strokeWidth="6" />
          <path d="M1408 252A16 16 0 1 0 1408 277" stroke="#f1f1f1" strokeWidth="6" />
          <path d="M1393 264H1410" stroke="#f1f1f1" strokeWidth="6" />
          <path d="M1407 254L1419 264L1407 275Z" fill="#f1f1f1" />
        </Pic>
      </Panel>

      <TabBar>
        <Pic x={0} y={318} w={126} h={135}>
          <path d="M45 363H75M39 371Q40 369 44 369H76Q80 369 81 371" {...line} strokeWidth={4} />
          <rect x="38" y="374" width="44" height="32" rx="5" {...line} />
          <path d="M56 387H65" {...line} />
        </Pic>
        <TabDivider />
        <Tab>
          <TabTitle>Login :: Damn Vulnerable We</TabTitle>
          <Pic x={735} y={330} w={66} h={108}>
            <path d="M746 374L767 395M767 374L746 395" {...line} strokeWidth={3} />
          </Pic>
        </Tab>
        <Pic x={804} y={318} w={120} h={135}>
          <path d="M852 386H886M869 369V403" {...line} strokeWidth={4} />
        </Pic>
        <Spacer />
        <Pic x={960} y={318} w={480} h={135}>
          <path d="M988 375L1005 391L1022 375" {...line} strokeWidth={4} />
          <circle cx="1230" cy="384" r="24" fill="#343844" />
          <circle cx="1317" cy="384" r="24" fill="#343844" />
          <circle cx="1404" cy="384" r="27" fill="#2673fb" />
          <path d="M1395 375L1413 393M1413 375L1395 393" stroke="#0b1020" strokeWidth="7" />
        </Pic>
      </TabBar>

      <NavBar>
        <Pic x={0} y={453} w={801} h={117}>
          <path d="M92 514H53M68 497L53 514L68 531" {...line} />
          <path d="M160 514H199M184 497L199 514L184 531" {...line} stroke="#85878c" />
          <path d="M303 500A19 19 0 1 0 307 517" {...line} />
          <path d="M309 492V508H292Z" fill="#f2f2f3" />
          <path d="M373 514L394 494L415 514M378 511V536H410V511" {...line} strokeWidth={4} />
          <path d="M388 536V523Q388 518 394 518Q400 518 400 523V536" {...line} strokeWidth={4} />
        </Pic>
        <UrlBar>
          <Pic x={801} y={465} w={180} h={96}>
            <path d="M849 491Q859 499 870 500Q871 524 849 535Q827 524 828 500Q839 499 849 491Z" {...line} strokeWidth={4} />
            <path d="M917 494H936L949 507V532H917ZM935 495V508H948" {...line} strokeWidth={4} />
          </Pic>
          <Label $ml={2} $ls={-0.07}>
            <Host>localhost</Host>/DVWA/login.php
          </Label>
          <Spacer />
          <Pic x={561} y={465} w={84} h={96}>
            <path d="M597 493L603 508L619 509L607 519L611 535L597 527L583 535L587 519L575 509L591 508Z" {...line} strokeWidth={3.5} />
          </Pic>
        </UrlBar>
        <Spacer />
        <Pic x={1005} y={453} w={435} h={117}>
          <path d="M1034 497H1066Q1069 497 1069 501V514Q1067 531 1050 531Q1033 531 1031 514V501Q1031 497 1034 497ZM1040 509L1050 518L1060 509" {...line} strokeWidth={4} />
          <circle cx="1159" cy="514" r="21" {...line} strokeWidth={4} />
          <circle cx="1159" cy="507" r="8" fill="#f2f2f3" />
          <path d="M1145 518H1173Q1172 528 1159 529Q1146 528 1145 518Z" fill="#f2f2f3" />
          <path d="M1250 502H1261V496Q1261 491 1268 491Q1275 491 1275 496V502H1285V535H1250V525H1255Q1260 525 1260 519Q1260 513 1255 513H1250Z" {...line} strokeWidth={4} />
          <path d="M1357 500H1391M1357 513H1391M1357 526H1391" {...line} strokeWidth={3.5} />
        </Pic>
      </NavBar>

      <BookmarkBar>
        <Bookmark $w={72} $ls={-0.3}>
          <Pic x={30} y={573} w={67} h={96}>
            <defs>
              <linearGradient id="off" x2="0" y2="1">
                <stop stopColor="#18b3b0" />
                <stop offset="1" stopColor="#5a2bd0" />
              </linearGradient>
            </defs>
            <path d="M53 600V640Q38 634 38 620Q38 607 53 600ZM57 599H62V643H57ZM66 600Q82 607 82 620Q82 634 66 640Z" fill="url(#off)" />
          </Pic>
          OffSec
        </Bookmark>
        <HoveredBookmark $w={90} $ls={-0.38}>
          <Pic x={252} y={579} w={71} h={81}>
            <g transform="translate(262 596) scale(.68)">
              <Dragon color="#000" />
            </g>
          </Pic>
          Kali Linux
        </HoveredBookmark>
        <Bookmark $w={96} $ls={-0.14}>
          <Pic x={540} y={573} w={65} h={96}>
            <circle cx="571" cy="620" r="21" fill="#2d7df6" />
            <g transform="translate(555 604) scale(.44)">
              <Dragon color="#fff" />
            </g>
            <circle cx="557" cy="632" r="12" fill="#d8252b" />
            <path d="M551 628H563M554 628V638M560 628V638" stroke="#fff" strokeWidth="2.500" />
          </Pic>
          Kali Tools
        </Bookmark>
        <Bookmark $w={90} $ls={-0.3}>
          <Pic x={828} y={573} w={62} h={96}>
            <path d="M837 599H874V644H837Z" fill="#d11a1e" />
            <path d="M837 599H842V644H837Z" fill="#8c1116" />
            <path d="M838 643H873" stroke="#e9c7c7" strokeWidth="3" />
            <path d="M851 612L846 618L851 624M864 612L869 618L864 624M861 611L854 616L861 620L854 625" stroke="#fff" strokeWidth="3" />
          </Pic>
          Kali Docs
        </Bookmark>
        <Bookmark $w={109} $ls={-0.28}>
          <Pic x={1098} y={573} w={68} h={96}>
            <path d="M1110 600H1154L1147 640H1112Z" fill="#2b7cf5" />
            <path d="M1107 601L1122 602L1138 616L1153 641L1133 635L1114 617Z" fill="#fff" />
            <path d="M1108 601L1124 606M1110 608L1122 616M1136 640L1128 628" stroke="#222" strokeWidth="2.500" />
          </Pic>
          Kali Forums
        </Bookmark>
        <Bookmark $w={128} $ls={-0.29}>
          <Pic x={1425} y={573} w={69} h={96}>
            <path d="M1440 603H1481L1474 640H1434Z" fill="#e02434" />
            <path d="M1434 622Q1448 602 1462 612Q1476 622 1478 642" stroke="#1c1c22" strokeWidth="10" />
            <path d="M1436 620Q1450 606 1461 616Q1472 622 1476 641M1448 638Q1440 627 1452 625" stroke="#fff" strokeWidth="6" />
          </Pic>
          Kali NetHunter
        </Bookmark>
        <Bookmark $w={104} $ls={0}>
          <Pic x={0} y={393} w={71} h={96}>
            <g transform="translate(12 421)">
              <Bug />
            </g>
          </Pic>
          Exploit-DB
        </Bookmark>
        <Bookmark $w={150} $ls={-0.34}>
          <Pic x={0} y={393} w={69} h={96}>
            <g transform="translate(9 421)">
              <Bug />
            </g>
          </Pic>
          Google Hacking DB
        </Bookmark>
      </BookmarkBar>

      <Page>
        <DvwaLogo />
        <LoginForm>
          <FieldLabel htmlFor="user">Username</FieldLabel>
          <Field id="user" />
          <FieldLabel htmlFor="pass">Password</FieldLabel>
          <Field id="pass" type="password" />
          <LoginButton type="button">Login</LoginButton>
        </LoginForm>
        <FooterLink>Damn Vulnerable Web Application (DVWA)</FooterLink>
        <Tooltip>
          <Label as="p" $ls={-0.38}>Kali Linux</Label>
          <Label as="p" $ls={-0.2}>https://www.kali.org/</Label>
        </Tooltip>
        <LinkStatus>https://www.kali.org</LinkStatus>
      </Page>

      <StatusBar>
        <StatusIcons />
        <HostKey>Right Ctrl</HostKey>
      </StatusBar>

      <Taskbar>
        <Pic x={60} y={213} w={150} h={171} ml={20}>
          <defs>
            <linearGradient id="sun" x2="0" y2="1">
              <stop stopColor="#f5b82e" />
              <stop offset="1" stopColor="#f07410" />
            </linearGradient>
            <linearGradient id="cloud" x2="0" y2="1">
              <stop stopColor="#eef4ff" />
              <stop offset="1" stopColor="#a9c5f5" />
            </linearGradient>
          </defs>
          <path d="M122 264A37 37 0 1 0 158 312L130 300Z" fill="url(#sun)" />
          <path d="M126 322Q116 322 116 313Q117 305 126 305Q132 292 144 295Q152 288 160 300Q170 303 168 313Q166 322 156 322Z" fill="url(#cloud)" />
          <rect x="109" y="236" width="88" height="60" rx="30" fill="#2b2c2f" />
          <text x="125" y="281" fontSize="38" fontFamily={segoe} fill="#fff" textLength="58" lengthAdjust="spacingAndGlyphs">33°</text>
        </Pic>
        <Pic x={690} y={213} w={120} h={171} ml={160}>
          <defs>
            <linearGradient id="win" x2="1" y2="1">
              <stop stopColor="#8fe2fc" />
              <stop offset=".5" stopColor="#40bdf8" />
              <stop offset="1" stopColor="#0993f6" />
            </linearGradient>
          </defs>
          <path d="M711 258H749V300H708V261Q708 258 711 258ZM753 258H792Q795 258 795 261V300H753ZM708 303H749V345H711Q708 345 708 342ZM753 303H795V342Q795 345 792 345H753Z" fill="url(#win)" />
        </Pic>
        <SearchPill>
          <Pic x={849} y={243} w={137} h={114}>
            <circle cx="914" cy="297" r="21" stroke="#26272a" strokeWidth="5.500" />
            <path d="M929 313L944 327" stroke="#26272a" strokeWidth="6.500" />
          </Pic>
          <SearchHint>Search</SearchHint>
          <Spacer />
          <Pic x={1470} y={243} w={198} h={114}>
            <defs>
              <linearGradient id="frog" x2="0" y2="1">
                <stop stopColor="#8be3c0" />
                <stop offset="1" stopColor="#2f9a83" />
              </linearGradient>
            </defs>
            <path d="M1478 341C1500 328 1530 326 1560 330C1600 332 1635 322 1655 304L1660 312C1650 328 1636 342 1616 348C1590 350 1575 338 1545 338C1520 338 1500 336 1480 344Z" fill="#8d6250" />
            <path d="M1498 282C1500 300 1515 312 1530 318L1500 324L1486 330L1530 328L1562 318L1570 292L1540 280Z" fill="#f7a431" />
            <path d="M1493 280C1496 274 1498 272 1498 268C1500 260 1512 260 1516 266C1524 260 1536 261 1540 268C1570 272 1600 282 1622 294C1640 300 1646 312 1638 322C1620 326 1590 324 1574 318C1568 306 1566 294 1552 288C1530 296 1506 290 1493 280Z" fill="url(#frog)" />
            <path d="M1582 292Q1578 308 1586 316M1618 296Q1600 300 1592 318H1634" stroke="#2a8a76" strokeWidth="3" />
            <ellipse cx="1530" cy="274" rx="12" ry="8" fill="#24323c" />
            <circle cx="1532" cy="273" r="4" fill="#c9f2e7" />
            <path d="M1542 335L1550 318M1558 340L1560 320M1576 334L1566 318" stroke="#f08a1d" strokeWidth="7" strokeLinecap="round" />
          </Pic>
        </SearchPill>
        <AppStrip>
          {appIcons.map((icon, i) => (
            <Pic key={i} x={-4.5 + i * 165} y={33} w={165} h={171}>
              {i === 0 && (
                <defs>
                  <linearGradient id="copA" gradientUnits="userSpaceOnUse" x1="220" y1="78" x2="210" y2="134">
                    <stop stopColor="#29a8ee" />
                    <stop offset=".5" stopColor="#35b7c0" />
                    <stop offset="1" stopColor="#d8dd37" />
                  </linearGradient>
                  <linearGradient id="copB" gradientUnits="userSpaceOnUse" x1="275" y1="98" x2="240" y2="160">
                    <stop stopColor="#a35df2" />
                    <stop offset=".5" stopColor="#ef5d9f" />
                    <stop offset="1" stopColor="#ffa04c" />
                  </linearGradient>
                  <linearGradient id="edge" gradientUnits="userSpaceOnUse" x1="34" y1="100" x2="123" y2="115">
                    <stop stopColor="#1d9be6" />
                    <stop offset=".55" stopColor="#35c5d8" />
                    <stop offset="1" stopColor="#6bdd5c" />
                  </linearGradient>
                </defs>
              )}
              {icon}
            </Pic>
          ))}
        </AppStrip>
        <Spacer />
        <Pic x={240} y={123} w={330} h={171}>
          <path d="M254 219L273 201L292 219" stroke="#fff" strokeWidth="5" />
          <rect x="365" y="188" width="56" height="41" rx="5" stroke="#fff" strokeWidth="4" />
          <path d="M374 199H379M384 199H389M394 199H399M404 199H412M378 208H383M388 208H393M398 208H403M407 208H412M377 219H409" stroke="#fff" strokeWidth="4" />
          <rect x="485" y="189" width="53" height="41" rx="6" stroke="#fff" strokeWidth="4.500" />
          <path d="M485 212H538M511 212V230" stroke="#fff" strokeWidth="4.500" />
        </Pic>
        <Label $ml={15} $w={42}>ENG</Label>
        <Pic x={741} y={123} w={279} h={171}>
          <path d="M769 204Q798 174 827 204M777 213Q798 192 819 213M785 221Q798 209 811 221" stroke="#fff" strokeWidth="4.500" />
          <circle cx="798" cy="227" r="5" fill="#fff" />
          <path d="M860 203H869L882 190V230L869 218H860Z" stroke="#fff" strokeWidth="4" />
          <path d="M891 202Q897 210 891 219M899 195Q909 210 899 225M907 188Q922 210 907 233" stroke="#fff" strokeWidth="4" />
          <path d="M969 194H996Q1001 194 1001 199V222Q1001 227 996 227H957Q952 227 952 222V215" stroke="#fff" strokeWidth="4.500" />
          <path d="M969 201H994V220H959V213ZM1003 204H1008V217H1003Z" fill="#fff" />
          <path d="M959 180L947 202H956L952 217L968 195H959L965 182Z" fill="#fff" />
        </Pic>
        <Clock>
          <Label>2:06 PM</Label>
          <Label>6/27/2025</Label>
        </Clock>
        <Pic x={1278} y={123} w={156} h={171}>
          <path d="M1335 185Q1352 185 1352 202V216L1359 226V229H1311V226L1318 216V202Q1318 185 1335 185ZM1326 232H1344Q1342 240 1335 240Q1328 240 1326 232Z" fill="#fff" />
          <path d="M1326 199H1336L1326 214H1337M1340 193H1349L1340 208H1350" stroke="#10407c" strokeWidth="3.500" />
          <path d="M1348 185H1359L1349 198H1361" stroke="#10407c" strokeWidth="9" />
          <path d="M1348 185H1359L1349 198H1361" stroke="#fff" strokeWidth="3.500" />
        </Pic>
      </Taskbar>
    </Screen>
  );
}
